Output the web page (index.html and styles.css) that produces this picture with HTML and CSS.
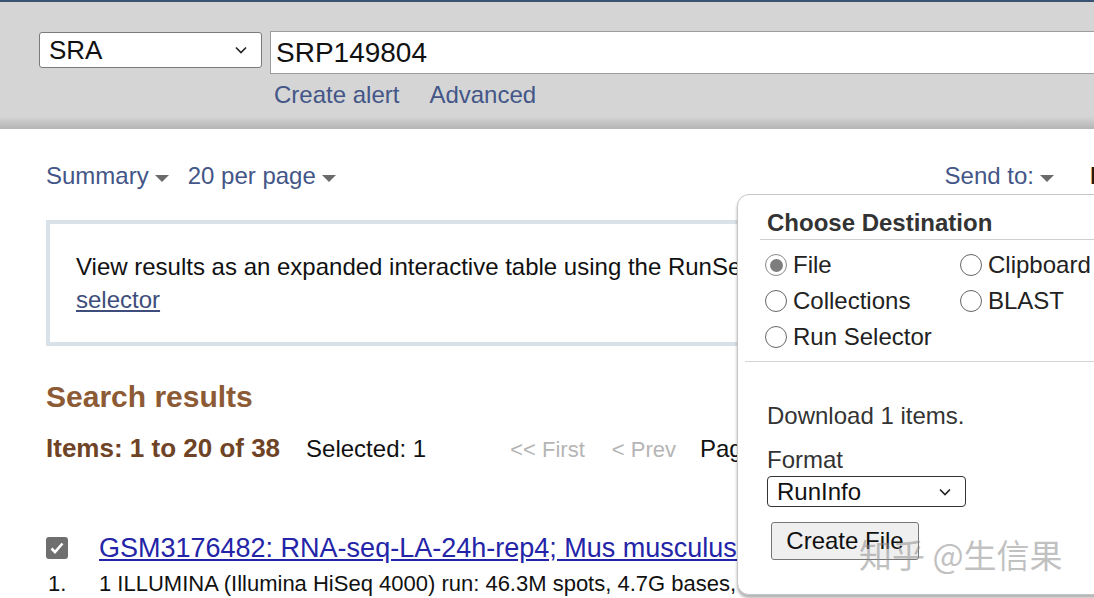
FILE: index.html
```html
<!DOCTYPE html>
<html>
    <head>
        <meta charset="utf-8">
        <title>SRP149804 - SRA</title>
        <link rel="stylesheet" href="styles.css">
    </head>
    <body>
        <div class="masthead">
            <div class="search-row">
                <div class="db-select">
                    <span>SRA</span>
                    <svg class="chevron" width="12" height="8" viewBox="0 0 12 8"><path d="M1 1.5 L6 6.5 L11 1.5" fill="none" stroke="#222" stroke-width="1.6"/></svg>
                </div>
                <div class="term-input">SRP149804</div>
            </div>
            <div class="search-links">
                <a href="#">Create alert</a>
                <a href="#">Advanced</a>
            </div>
        </div><!-- masthead -->

        <div class="content">
            <div class="toolbar">
                <a class="menu" href="#">Summary<i class="caret"></i></a>
                <a class="menu" href="#">20 per page<i class="caret"></i></a>
                <a class="menu send-to" href="#">Send to:<i class="caret"></i></a>
                <span class="filters">Filters</span>
            </div>

            <div class="notice">
                <p class="notice-line">View results as an expanded interactive table using the RunSelector. Send results to Run</p>
                <a href="#">selector</a>
            </div>

            <h2 class="results-title">Search results</h2>

            <div class="pager-row">
                <span class="items">Items: 1 to 20 of 38</span>
                <span class="selected">Selected: 1</span>
                <span class="pager-link first">&lt;&lt; First</span>
                <span class="pager-link prev">&lt; Prev</span>
                <span class="page">Page</span>
            </div>

            <div class="result">
                <span class="check">
                    <svg width="14" height="12" viewBox="0 0 14 12"><path d="M1.5 6.5 L5 10 L12.5 1.5" fill="none" stroke="#fff" stroke-width="2.6"/></svg>
                </span>
                <a class="result-title" href="#">GSM3176482: RNA-seq-LA-24h-rep4; Mus musculus; RNA-Seq</a>
                <span class="num">1.</span>
                <p class="result-desc">1 ILLUMINA (Illumina HiSeq 4000) run: 46.3M spots, 4.7G bases, 1.6Gb downloads</p>
            </div>
        </div><!-- content -->

        <div class="send-popup">
            <h3 class="popup-title">Choose Destination</h3>
            <div class="dest-grid">
                <label class="dest"><i class="radio on"></i>File</label>
                <label class="dest"><i class="radio"></i>Clipboard</label>
                <label class="dest"><i class="radio"></i>Collections</label>
                <label class="dest"><i class="radio"></i>BLAST</label>
                <label class="dest"><i class="radio"></i>Run Selector</label>
            </div>
            <div class="divider"></div>
            <p class="download">Download 1 items.</p>
            <p class="format-label">Format</p>
            <div class="format-select">
                <span>RunInfo</span>
                <svg class="chevron" width="12" height="8" viewBox="0 0 12 8"><path d="M1 1.5 L6 6.5 L11 1.5" fill="none" stroke="#222" stroke-width="1.6"/></svg>
            </div>
            <button class="create-btn">Create File</button>
        </div><!-- send-popup -->

        <div class="watermark">知乎 @生信果</div>
    </body>
</html>
```

FILE: styles.css
```css
body {
    margin: 0;
    height: 598px;
    overflow: hidden;
    position: relative;
    background: #ffffff;
    font-family: "Liberation Sans", Arial, sans-serif;
    color: #111111;
}

a {
    color: #435687;
    text-decoration: none;
}

p, h2, h3 {
    margin: 0;
}

/* header */

.masthead {
    box-sizing: border-box;
    height: 129px;
    padding: 29px 0 0 39px;
    border-top: 2px solid #3b5373;
    background: linear-gradient(#d5d5d5 0, #d5d5d5 90%, #b4b4b4 100%);
}

.search-row {
    display: flex;
    align-items: flex-start;
}

.db-select {
    box-sizing: border-box;
    width: 223px;
    height: 36px;
    margin-top: 1px;
    padding: 0 14px 0 9px;
    display: flex;
    align-items: center;
    justify-content: space-between;
    background: #ffffff;
    border: 1px solid #7a7a7a;
    border-radius: 3px;
    font-size: 26px;
}

.term-input {
    box-sizing: border-box;
    flex: 1;
    height: 43px;
    margin: 0 -10px 0 8px;
    padding-left: 5px;
    display: flex;
    align-items: center;
    background: #ffffff;
    border: 1px solid #9c9c9c;
    font-size: 28px;
}

.search-links {
    display: flex;
    gap: 30px;
    margin: 7px 0 0 235px;
    font-size: 24px;
    line-height: 28px;
}

/* content */

.content {
    padding: 33px 0 0 46px;
}

.toolbar {
    display: flex;
    align-items: center;
    height: 28px;
    font-size: 24px;
}

.menu {
    display: flex;
    align-items: center;
    margin-right: 19px;
}

.caret {
    width: 0;
    height: 0;
    margin: 4px 0 0 6px;
    border-left: 7px solid transparent;
    border-right: 7px solid transparent;
    border-top: 7px solid #6a6a6a;
}

.send-to {
    margin-left: auto;
    margin-right: 36px;
}

.filters {
    flex: 0 0 4px;
    overflow: hidden;
    white-space: nowrap;
    color: #2a1a10;
    font-weight: bold;
}

.notice {
    width: 1010px;
    margin-top: 30px;
    padding: 26px 0 26px 26px;
    box-sizing: border-box;
    border: 4px solid #d9e1e9;
    font-size: 24px;
    line-height: 33px;
}

.notice-line {
    white-space: nowrap;
}

.notice a {
    color: #3e4d7c;
    text-decoration: underline;
}

.results-title {
    margin-top: 33px;
    font-size: 30px;
    line-height: 36px;
    color: #8c5a35;
}

.pager-row {
    display: flex;
    align-items: baseline;
    margin-top: 18px;
    line-height: 30px;
    font-size: 24px;
}

.items {
    font-size: 26px;
    font-weight: bold;
    color: #6f4326;
}

.selected {
    margin-left: 26px;
}

.pager-link {
    color: #b5b5b5;
    font-size: 22px;
}

.first {
    margin-left: 84px;
}

.prev {
    margin-left: 27px;
}

.page {
    margin-left: 24px;
}

.result {
    display: grid;
    grid-template-columns: 53px 1fr;
    row-gap: 6px;
    margin-top: 67px;
    white-space: nowrap;
}

.check {
    width: 22px;
    height: 22px;
    align-self: center;
    display: flex;
    align-items: center;
    justify-content: center;
    background: #6f6f6f;
    border-radius: 3px;
}

.result-title {
    font-size: 27px;
    line-height: 32px;
    color: #2424a8;
    text-decoration: underline;
}

.num {
    padding-left: 2px;
    font-size: 22px;
    line-height: 28px;
}

.result-desc {
    font-size: 22px;
    line-height: 28px;
}

/* send to popup */

.send-popup {
    position: absolute;
    left: 737px;
    top: 194px;
    width: 420px;
    height: 401px;
    box-sizing: border-box;
    padding: 14px 0 0 29px;
    background: #ffffff;
    border: 1px solid #c6c6c6;
    border-radius: 12px 0 0 12px;
    box-shadow: 0 3px 3px rgba(0, 0, 0, 0.3);
    color: #333333;
    font-size: 24px;
}

.popup-title {
    margin-left: -7px;
    padding: 0 0 2px 7px;
    border-bottom: 1px solid #d0d0d0;
    font-size: 24px;
    line-height: 28px;
}

.dest-grid {
    display: grid;
    grid-template-columns: 195px auto;
    grid-auto-rows: 36px;
    margin: 7px 0 0 -2px;
}

.dest {
    display: flex;
    align-items: center;
    color: #222222;
}

.radio {
    box-sizing: border-box;
    width: 22px;
    height: 22px;
    margin-right: 6px;
    border: 1.5px solid #666666;
    border-radius: 50%;
    display: flex;
    align-items: center;
    justify-content: center;
}

.radio.on {
    border-color: #8a8a8a;
}

.radio.on:after {
    content: "";
    width: 13px;
    height: 13px;
    border-radius: 50%;
    background: #7d7d7d;
}

.divider {
    margin: 6px 0 0 -22px;
    border-top: 1px solid #d4d4d4;
}

.download {
    margin-top: 40px;
    line-height: 28px;
}

.format-label {
    margin-top: 16px;
    line-height: 28px;
}

.format-select {
    box-sizing: border-box;
    width: 199px;
    height: 31px;
    margin-top: 2px;
    padding: 0 14px 0 9px;
    display: flex;
    align-items: center;
    justify-content: space-between;
    border: 1px solid #333333;
    border-radius: 4px;
    color: #111111;
}

.create-btn {
    display: block;
    width: 148px;
    height: 38px;
    margin: 15px 0 0 4px;
    padding: 0;
    background: #efefef;
    border: 1px solid #767676;
    border-radius: 3px;
    font-family: "Liberation Sans", Arial, sans-serif;
    font-size: 24px;
    color: #111111;
}

.watermark {
    position: absolute;
    left: 859px;
    top: 530px;
    font-family: "Noto Sans CJK SC", sans-serif;
    font-size: 33px;
    color: rgba(140, 140, 140, 0.55);
    white-space: nowrap;
}
```
